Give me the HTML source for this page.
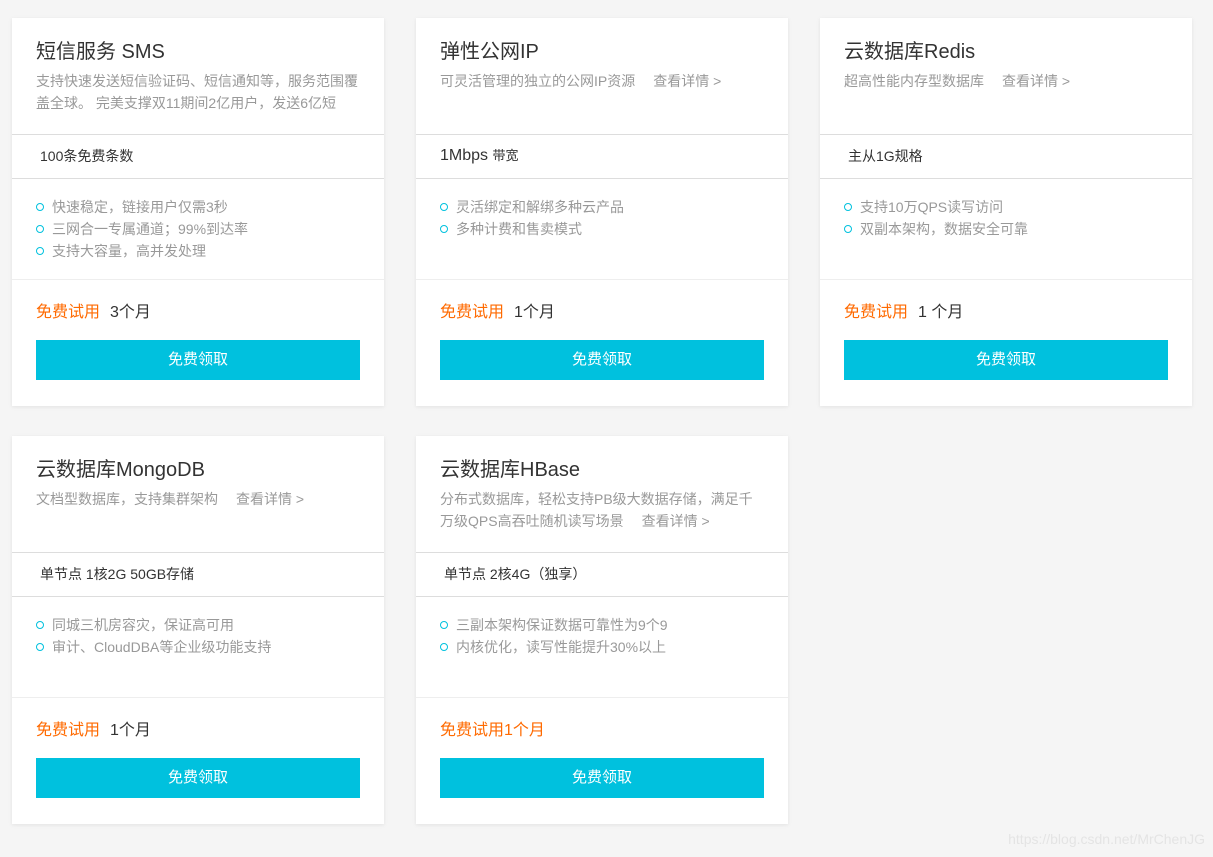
<!DOCTYPE html>
<html><head><meta charset="utf-8"><style>
*{margin:0;padding:0;box-sizing:border-box}
body{width:1213px;height:857px;background:#f5f5f5;font-family:"Liberation Sans","Noto Sans CJK SC",sans-serif;position:relative;overflow:hidden}
.c{position:absolute;width:372px;height:388px;background:#fff;box-shadow:0 1px 4px rgba(0,0,0,.08)}
.t{position:absolute;left:24px;top:20px;font-size:20px;color:#333;line-height:28px}
.d{position:absolute;left:24px;top:52px;width:325px;font-size:14px;color:#999;line-height:22px}
.d a{margin-left:18px;color:#999}
.l1{position:absolute;left:0;right:0;top:116px;border-top:1px solid #ddd}
.s{position:absolute;left:28px;top:116px;height:44px;line-height:44px;font-size:14px;color:#333}
.l2{position:absolute;left:0;right:0;top:160px;border-top:1px solid #ddd}
.f{position:absolute;left:24px;top:178px;font-size:14px;color:#999;line-height:22px;list-style:none}
.f li{position:relative;padding-left:16px}
.f li:before{content:"";position:absolute;left:0;top:7px;width:8px;height:8px;border:1.5px solid #00c1de;border-radius:50%;box-sizing:border-box}
.l3{position:absolute;left:0;right:0;top:261px;border-top:1px solid #eee}
.p{position:absolute;left:24px;top:284px;font-size:16px;line-height:22px;color:#333}
.p b{font-weight:normal;color:#ff6a00;margin-right:10px}
.btn{position:absolute;left:24px;top:322px;width:324px;height:40px;background:#00c1de;color:#fff;font-size:15px;line-height:40px;text-align:center}
.wm{position:absolute;right:8px;bottom:10px;font-size:14px;color:#e4e4e4}
</style></head><body>
<div class="c" style="left:12px;top:18px">
<div class="t">短信服务 SMS</div>
<div class="d">支持快速发送短信验证码、短信通知等，服务范围覆盖全球。 完美支撑双11期间2亿用户，发送6亿短</div>
<div class="l1"></div><div class="s">100条免费条数</div><div class="l2"></div>
<ul class="f"><li>快速稳定，链接用户仅需3秒</li><li>三网合一专属通道；99%到达率</li><li>支持大容量，高并发处理</li></ul>
<div class="l3"></div><div class="p"><b>免费试用</b>3个月</div><div class="btn">免费领取</div></div>

<div class="c" style="left:416px;top:18px">
<div class="t">弹性公网IP</div>
<div class="d">可灵活管理的独立的公网IP资源<a>查看详情 &gt;</a></div>
<div class="l1"></div><div class="s" style="left:24px;font-size:16px">1Mbps <span style="font-size:13px">带宽</span></div><div class="l2"></div>
<ul class="f"><li>灵活绑定和解绑多种云产品</li><li>多种计费和售卖模式</li></ul>
<div class="l3"></div><div class="p"><b>免费试用</b>1个月</div><div class="btn">免费领取</div></div>

<div class="c" style="left:820px;top:18px">
<div class="t">云数据库Redis</div>
<div class="d">超高性能内存型数据库<a>查看详情 &gt;</a></div>
<div class="l1"></div><div class="s">主从1G规格</div><div class="l2"></div>
<ul class="f"><li>支持10万QPS读写访问</li><li>双副本架构，数据安全可靠</li></ul>
<div class="l3"></div><div class="p"><b>免费试用</b>1 个月</div><div class="btn">免费领取</div></div>

<div class="c" style="left:12px;top:436px">
<div class="t">云数据库MongoDB</div>
<div class="d">文档型数据库，支持集群架构<a>查看详情 &gt;</a></div>
<div class="l1"></div><div class="s">单节点 1核2G 50GB存储</div><div class="l2"></div>
<ul class="f"><li>同城三机房容灾，保证高可用</li><li>审计、CloudDBA等企业级功能支持</li></ul>
<div class="l3"></div><div class="p"><b>免费试用</b>1个月</div><div class="btn">免费领取</div></div>

<div class="c" style="left:416px;top:436px">
<div class="t">云数据库HBase</div>
<div class="d" style="width:316px">分布式数据库，轻松支持PB级大数据存储，满足千万级QPS高吞吐随机读写场景<a>查看详情 &gt;</a></div>
<div class="l1"></div><div class="s">单节点 2核4G（独享）</div><div class="l2"></div>
<ul class="f"><li>三副本架构保证数据可靠性为9个9</li><li>内核优化，读写性能提升30%以上</li></ul>
<div class="l3"></div><div class="p" style="color:#ff6a00">免费试用1个月</div><div class="btn">免费领取</div></div>

<div class="wm">https://blog.csdn.net/MrChenJG</div>
</body></html>
